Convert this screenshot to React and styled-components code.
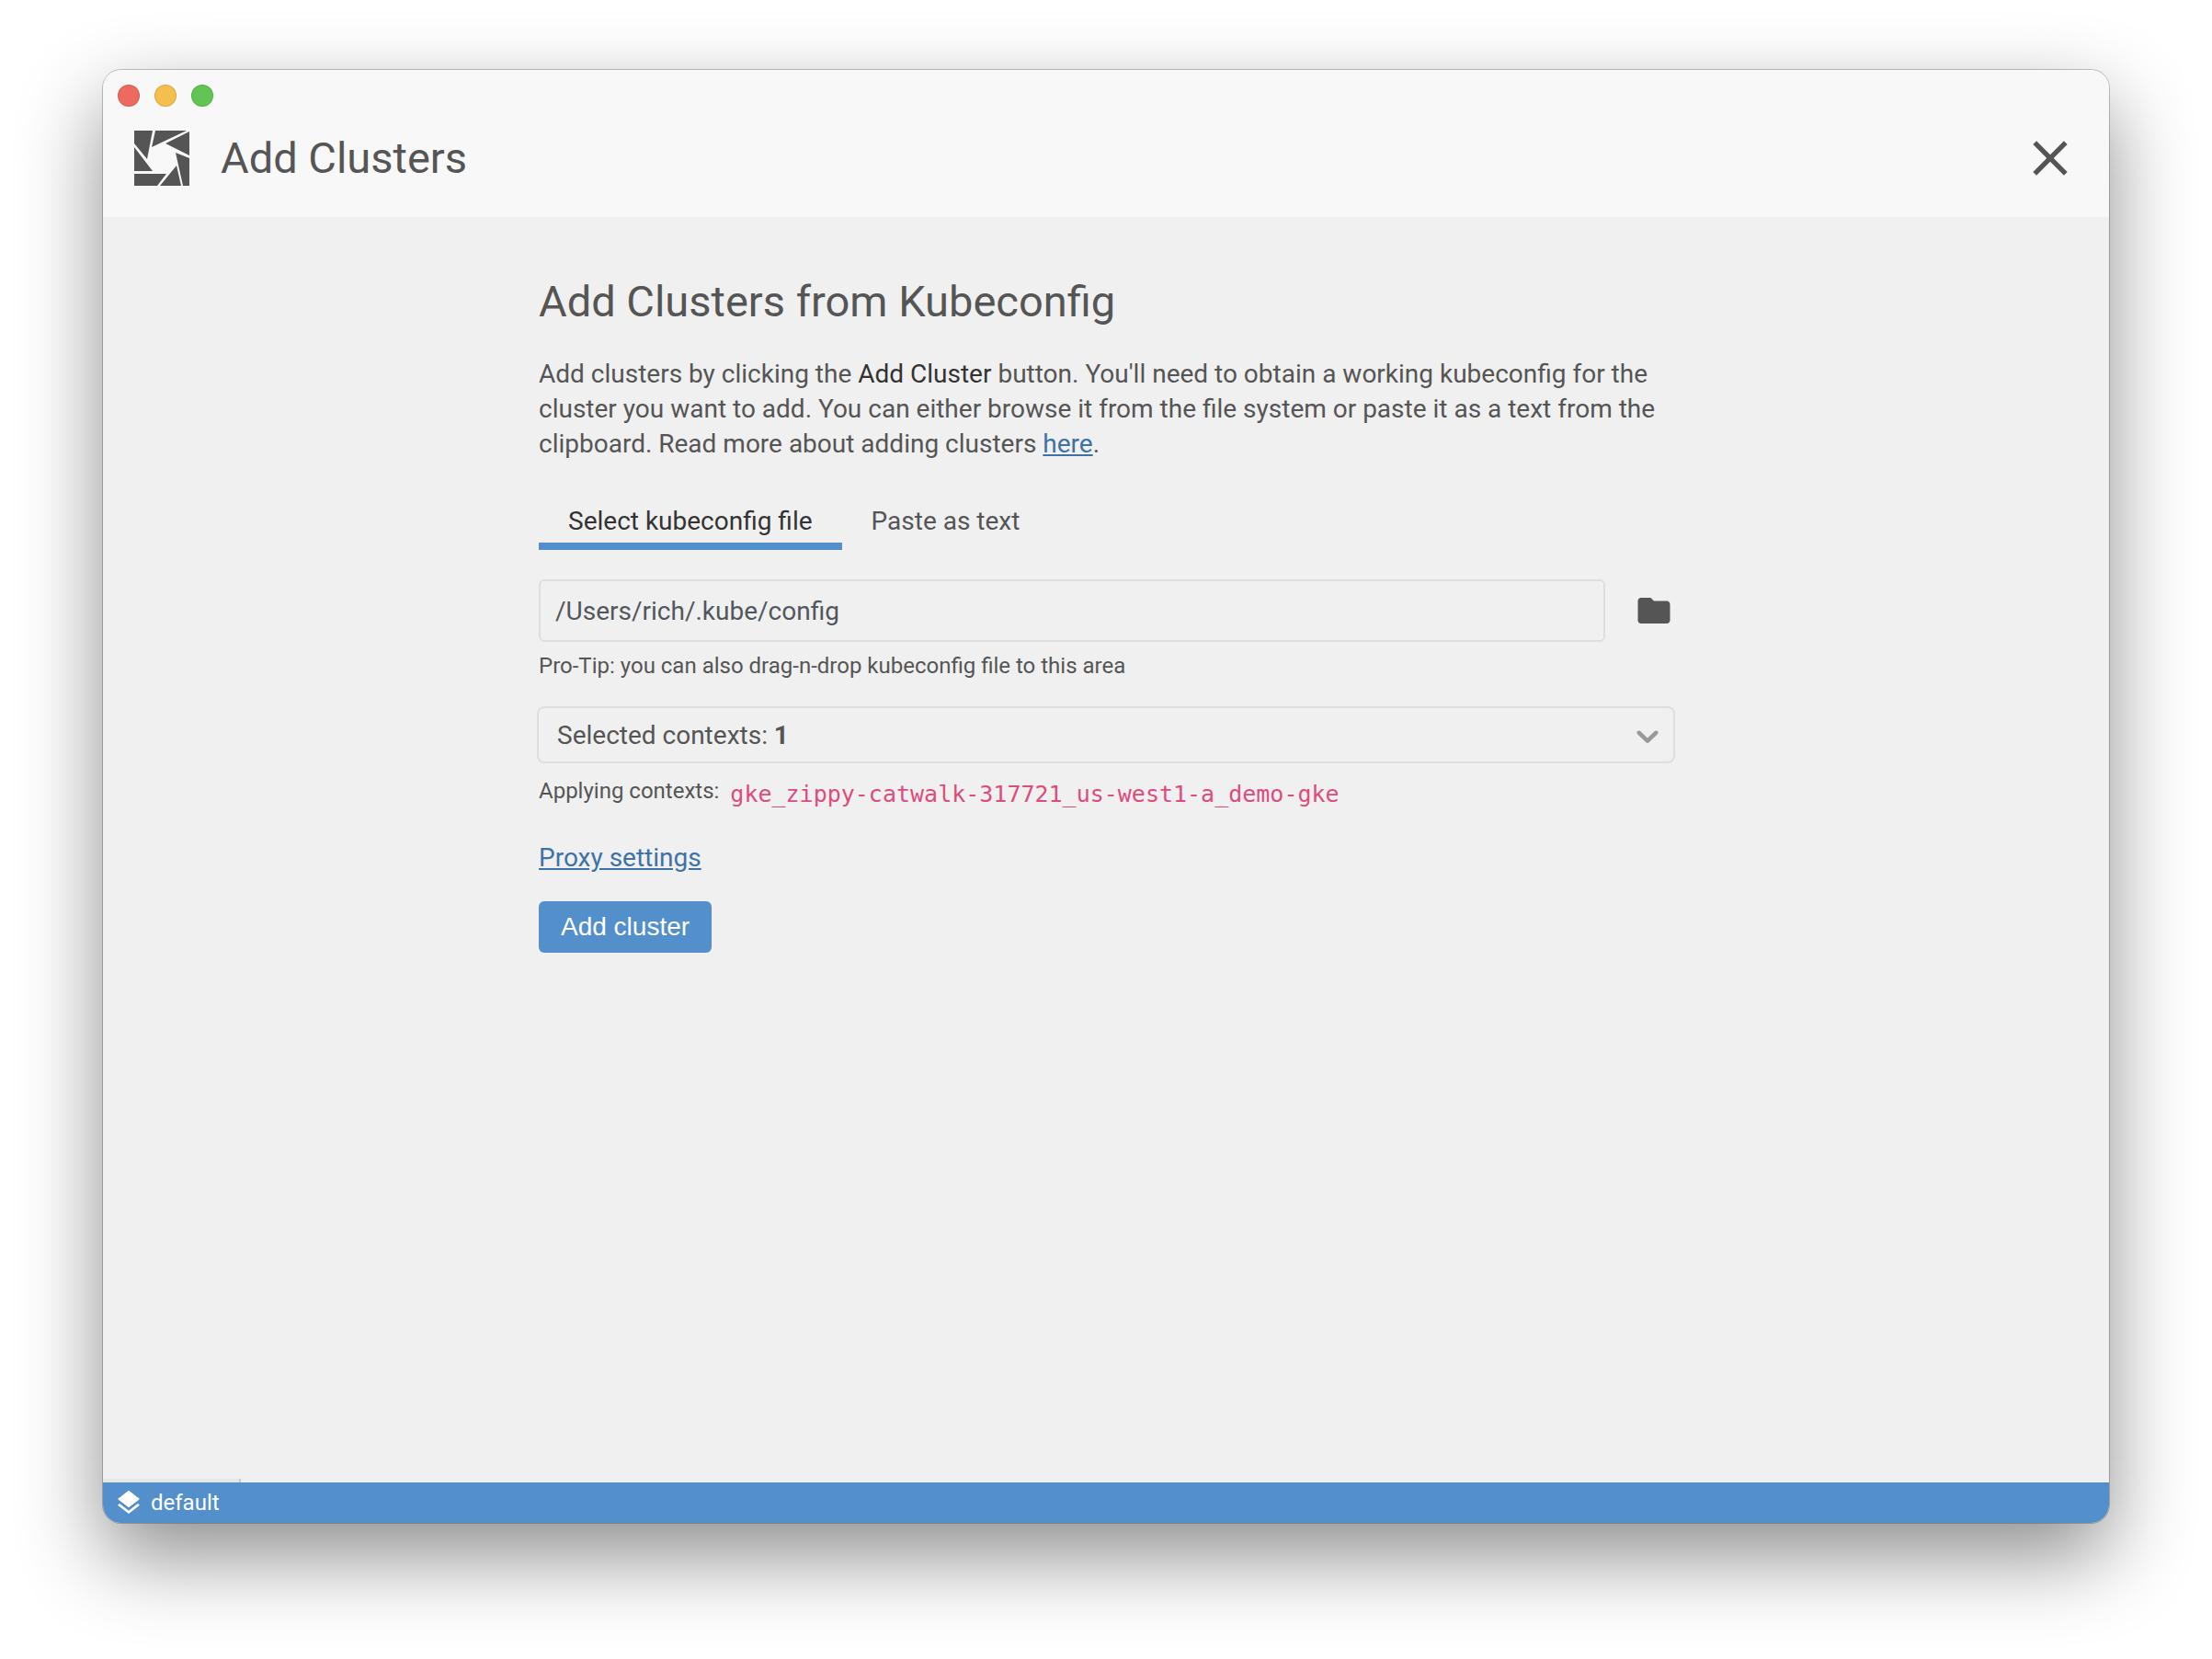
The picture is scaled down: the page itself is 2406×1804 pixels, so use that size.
import React, { useState } from 'react';
import styled, { createGlobalStyle } from 'styled-components';
import { MdClose, MdFolder, MdLayers } from 'react-icons/md';

const GlobalStyle = createGlobalStyle`
  *, *::before, *::after {
    box-sizing: border-box;
  }

  body {
    margin: 0;
    background: #ffffff;
    color: #555555;
    font: 28px/38px Roboto, sans-serif;
  }
`;

const Desktop = styled.div`
  display: flex;
  min-height: 100vh;
  padding: 76px 112px 148px;
`;

const AppWindow = styled.div`
  flex: 1;
  display: flex;
  flex-direction: column;
  overflow: hidden;
  border-radius: 20px;
  background: #f0f0f0;
  box-shadow:
    0 0 0 1px rgba(0, 0, 0, 0.22),
    0 36px 90px rgba(0, 0, 0, 0.45);
`;

const TopBar = styled.header`
  height: 160px;
  padding: 16px 32px 0 16px;
  background: #f8f8f8;
`;

const TrafficLights = styled.div`
  display: flex;
  gap: 16px;
`;

const Light = styled.span`
  width: 24px;
  height: 24px;
  border: 1px solid rgba(0, 0, 0, 0.12);
  border-radius: 50%;
  background: ${props => props.$color};
`;

const TitleRow = styled.div`
  display: flex;
  align-items: center;
  height: 60px;
  margin-top: 26px;
  padding-left: 18px;
`;

const Logo = styled.svg`
  flex: none;
  width: 60px;
  height: 60px;
  margin-right: 34px;
`;

const Title = styled.h1`
  flex: 1;
  margin: 0;
  font-size: 47px;
  font-weight: 400;
  line-height: 60px;
`;

const IconButton = styled.button`
  display: flex;
  align-items: center;
  justify-content: center;
  padding: 0;
  border: 0;
  background: none;
  color: #555555;
  font-size: ${props => props.$size}px;
  cursor: pointer;
`;

const Main = styled.main`
  flex: 1;
  padding: 62px 24px;
`;

const Content = styled.form`
  width: 100%;
  max-width: 1234px;
  margin: 0 auto;
`;

const Heading = styled.h2`
  margin: 0 0 30px;
  font-size: 47px;
  font-weight: 400;
  line-height: 60px;
`;

const Intro = styled.p`
  margin: 0;

  b {
    color: #333333;
    font-weight: 400;
  }
`;

const Link = styled.a`
  color: #3d72a6;
  text-decoration: underline;
`;

const Tabs = styled.div`
  display: flex;
  margin-top: 38px;
`;

const Tab = styled.button`
  padding: 8px 32px 4px;
  border: 0;
  border-bottom: 8px solid ${props => (props.$active ? '#528fcb' : 'transparent')};
  background: none;
  color: ${props => (props.$active ? '#333333' : '#555555')};
  font: inherit;
  cursor: pointer;
`;

const FileRow = styled.div`
  display: flex;
  align-items: center;
  gap: 32px;
  margin-top: 32px;
`;

const PathInput = styled.input`
  flex: 1;
  min-width: 0;
  height: 68px;
  padding: 0 16px;
  border: 2px solid #dedede;
  border-radius: 6px;
  outline: 0;
  background: transparent;
  color: #51575d;
  font: inherit;
`;

const Hint = styled.div`
  margin-top: 10px;
  font-size: 24px;
  line-height: 32px;
`;

const ContextPicker = styled.button`
  display: flex;
  align-items: center;
  justify-content: space-between;
  width: calc(100% + 4px);
  height: 62px;
  margin: 28px -2px 0;
  padding: 2px 8px 0 20px;
  border: 2px solid #dedede;
  border-radius: 8px;
  background: transparent;
  color: #555555;
  font: inherit;
  cursor: pointer;

  svg {
    width: 40px;
    height: 40px;
    fill: #999999;
  }
`;

const Applying = styled.div`
  display: flex;
  gap: 12px;
  margin-top: 14px;
  font-size: 24px;
  line-height: 32px;

  code {
    padding-top: 4px;
    color: #dd4c7c;
    font: 25px/32px "DejaVu Sans Mono", monospace;
  }
`;

const ProxyRow = styled.div`
  margin-top: 34px;
`;

const AddButton = styled.button`
  height: 56px;
  margin-top: 28px;
  padding: 0 24px;
  border: 0;
  border-radius: 6px;
  background: #528fcb;
  color: #ffffff;
  font: 28px/38px "Liberation Sans", Arial, sans-serif;
  cursor: pointer;
`;

const TabMenuEdge = styled.div`
  width: 150px;
  height: 4px;
  border-right: 2px solid #c8ccd0;
  background: #e8e8e8;
`;

const StatusBar = styled.footer`
  display: flex;
  align-items: center;
  gap: 8px;
  height: 44px;
  padding-left: 12px;
  background: #528fcb;
  color: #ffffff;
  font-size: 24px;
  line-height: 32px;

  svg {
    font-size: 32px;
  }
`;

const LensLogo = () => (
    <Logo viewBox='0 0 60 60' fill='#555555' aria-hidden='true'>
        <path d='M0 0H20L14 31L0 14Z' />
        <path d='M23 0H57L19 18Z' />
        <path d='M60 1V27L34 14Z' />
        <path d='M45 24L60 30V60H53Z' />
        <path d='M46 38L51 60H28Z' />
        <path d='M0 47H35L25 60H0Z' />
        <path d='M0 18L20 44H0Z' />
    </Logo>
);

const TABS = [
    { id: 'file', label: 'Select kubeconfig file' },
    { id: 'text', label: 'Paste as text' }
];

const App = () => {
    const [ tab, setTab ] = useState('file');
    const [ path, setPath ] = useState('/Users/rich/.kube/config');

    return (
        <Desktop>
            <GlobalStyle />
            <AppWindow>
                <TopBar>
                    <TrafficLights>
                        <Light $color='#ed6a5e' />
                        <Light $color='#f5bf4f' />
                        <Light $color='#61c554' />
                    </TrafficLights>
                    <TitleRow>
                        <LensLogo />
                        <Title>Add Clusters</Title>
                        <IconButton type='button' aria-label='Close' $size={64}>
                            <MdClose />
                        </IconButton>
                    </TitleRow>
                </TopBar>

                <Main>
                    <Content onSubmit={e => e.preventDefault()}>
                        <Heading>Add Clusters from Kubeconfig</Heading>
                        <Intro>
                            Add clusters by clicking the <b>Add Cluster</b> button. You'll need to obtain a
                            working kubeconfig for the cluster you want to add. You can either browse it from
                            the file system or paste it as a text from the clipboard. Read more about adding
                            clusters <Link href='#docs'>here</Link>.
                        </Intro>

                        <Tabs role='tablist'>
                            {TABS.map(item => (
                                <Tab
                                    key={item.id}
                                    type='button'
                                    role='tab'
                                    aria-selected={tab === item.id}
                                    $active={tab === item.id}
                                    onClick={() => setTab(item.id)}
                                >
                                    {item.label}
                                </Tab>
                            ))}
                        </Tabs>

                        <FileRow>
                            <PathInput
                                aria-label='Kubeconfig file path'
                                value={path}
                                onChange={e => setPath(e.target.value)}
                            />
                            <IconButton type='button' aria-label='Browse' $size={42}>
                                <MdFolder />
                            </IconButton>
                        </FileRow>
                        <Hint>Pro-Tip: you can also drag-n-drop kubeconfig file to this area</Hint>

                        <ContextPicker type='button' aria-haspopup='listbox'>
                            <span>Selected contexts: <b>1</b></span>
                            <svg viewBox='0 0 20 20' aria-hidden='true'>
                                <path d='M4.516 7.548c0.436-0.446 1.043-0.481 1.576 0l3.908 3.747 3.908-3.747c0.533-0.481 1.141-0.446 1.574 0 0.436 0.445 0.408 1.197 0 1.615-0.406 0.418-4.695 4.502-4.695 4.502-0.217 0.223-0.502 0.335-0.787 0.335s-0.57-0.112-0.789-0.335c0 0-4.287-4.084-4.695-4.502s-0.436-1.17 0-1.615z' />
                            </svg>
                        </ContextPicker>
                        <Applying>
                            <span>Applying contexts:</span>
                            <code>gke_zippy-catwalk-317721_us-west1-a_demo-gke</code>
                        </Applying>

                        <ProxyRow>
                            <Link href='#proxy'>Proxy settings</Link>
                        </ProxyRow>
                        <AddButton type='submit'>Add cluster</AddButton>
                    </Content>
                </Main>

                <TabMenuEdge />
                <StatusBar>
                    <MdLayers />
                    <span>default</span>
                </StatusBar>
            </AppWindow>
        </Desktop>
    );
};

export default App;
